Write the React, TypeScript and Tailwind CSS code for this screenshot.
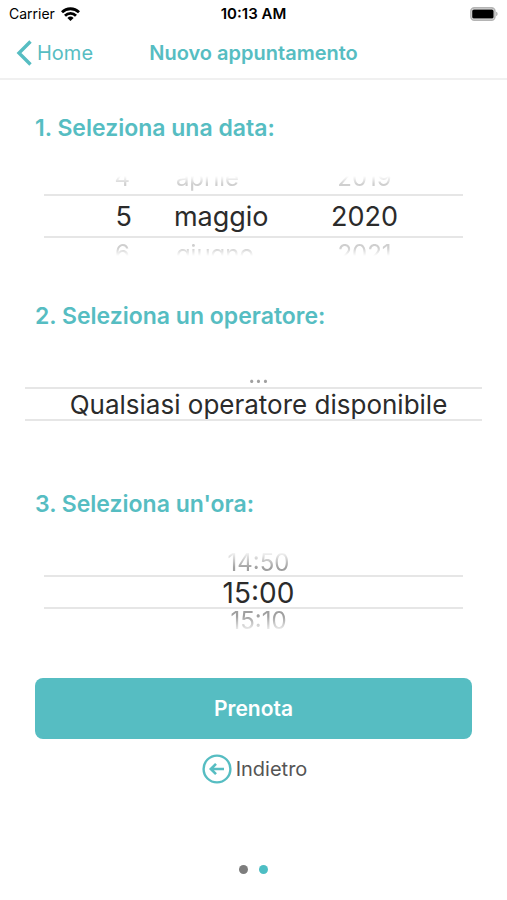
import { useState } from "react";
import clsx from "clsx";

type Column = {
  label: string;
  values: string[];
  index: number;
  onChange: (index: number) => void;
  className?: string;
  sideClassName?: string;
};

type WheelProps = {
  columns: Column[];
  gridClassName: string;
  textClassName: string;
  tall?: boolean;
};

const days = Array.from({ length: 31 }, (_, i) => String(i + 1));
const months = [
  "gennaio",
  "febbraio",
  "marzo",
  "aprile",
  "maggio",
  "giugno",
  "luglio",
  "agosto",
  "settembre",
  "ottobre",
  "novembre",
  "dicembre",
];
const years = ["2018", "2019", "2020", "2021", "2022"];
const operators = ["...", "Qualsiasi operatore disponibile"];
const times = ["14:40", "14:50", "15:00", "15:10", "15:20"];

function Wheel({ columns, gridClassName, textClassName, tall }: WheelProps) {
  const side = (offset: number) =>
    columns.map((c) => {
      const value = c.values[c.index + offset];
      return value ? (
        <button
          key={c.label}
          type="button"
          aria-label={`${c.label}: ${value}`}
          onClick={() => c.onChange(c.index + offset)}
          className={clsx("leading-6", c.className, c.sideClassName)}
        >
          {value}
        </button>
      ) : (
        <span key={c.label} />
      );
    });

  return (
    <div>
      <div
        className={clsx(
          "grid content-end overflow-hidden text-2xl text-[#a0a0a0]",
          tall
            ? "h-5 pb-1 opacity-50 [mask-image:linear-gradient(to_top,black_50%,transparent_90%)]"
            : "h-6 [mask-image:linear-gradient(to_top,black_30%,transparent)]",
          gridClassName,
        )}
      >
        {side(-1)}
      </div>
      <div
        className={clsx(
          "grid items-center border-y-2 border-[#e6e6e6] pt-0.5 leading-7 text-[#2b2b2b]",
          tall ? "h-11" : "h-[34px]",
          textClassName,
          gridClassName,
        )}
      >
        {columns.map((c) => (
          <output key={c.label} aria-label={c.label} className={clsx("whitespace-nowrap", c.className)}>
            {c.values[c.index]}
          </output>
        ))}
      </div>
      <div
        className={clsx(
          "grid content-start overflow-hidden text-2xl text-[#a0a0a0]",
          tall
            ? "h-5 pt-1 opacity-50 [mask-image:linear-gradient(to_bottom,black_50%,transparent_90%)]"
            : "h-6 [mask-image:linear-gradient(to_bottom,black_30%,transparent)]",
          gridClassName,
        )}
      >
        {side(1)}
      </div>
    </div>
  );
}

function StatusBar() {
  return (
    <div className="grid h-7 grid-cols-3 items-center px-[9px] text-sm text-black">
      <div className="flex items-center gap-1.5">
        <span>Carrier</span>
        <svg width="19" height="14" viewBox="0 0 19 14" fill="none" stroke="#000" strokeWidth="2.8" aria-hidden="true">
          <path d="M1 5.2a12.2 12.2 0 0 1 17 0" />
          <path d="M4 8.7a7.8 7.8 0 0 1 11 0" />
          <path d="M9.5 14 6.4 10.9a4.5 4.5 0 0 1 6.2 0z" fill="#000" stroke="none" />
        </svg>
      </div>
      <span className="text-center text-[15px] font-semibold">10:13 AM</span>
      <svg className="justify-self-end" width="30" height="14" viewBox="0 0 30 14" aria-hidden="true">
        <rect x="2.9" y="0.9" width="24" height="12.2" rx="3.4" fill="#fff" stroke="#b4b4b4" strokeWidth="1.6" />
        <rect x="4.2" y="2.4" width="21.4" height="9.2" rx="1.6" fill="#000" />
        <path d="M28.2 4.8c1.8.6 1.8 3.8 0 4.4z" fill="#a9a9a9" />
      </svg>
    </div>
  );
}

export default function App() {
  const [day, setDay] = useState(4);
  const [month, setMonth] = useState(4);
  const [year, setYear] = useState(2);
  const [operator, setOperator] = useState(1);
  const [time, setTime] = useState(2);

  return (
    <div className="flex min-h-screen flex-col bg-white font-['Inter','Liberation_Sans',sans-serif]">
      <StatusBar />
      <header className="grid h-[52px] grid-cols-[1fr_auto_1fr] items-center border-b-2 border-[#f0f0f0] px-4 text-xl text-[#56bdc2]">
        <a href="#home" className="flex items-center gap-1">
          <svg width="17" height="26" viewBox="0 0 17 26" fill="none" stroke="currentColor" strokeWidth="3.4" aria-hidden="true">
            <path d="M14.5 1.5 3 13l11.5 11.5" />
          </svg>
          Home
        </a>
        <h1 className="font-semibold">Nuovo appuntamento</h1>
      </header>

      <main className="pt-8">
        <h2 className="px-[35px] text-[23px] leading-8 font-semibold text-[#56bdc2]">1. Seleziona una data:</h2>
        <div className="mt-[30px] px-[44px]">
          <Wheel
            tall
            textClassName="text-[27px]"
            gridClassName="grid-cols-[21%_10%_27%_37%_5%]"
            columns={[
              { label: "Giorno", values: days, index: day, onChange: setDay, className: "text-right", sideClassName: "pr-0.5" },
              { label: "Mese", values: months, index: month, onChange: setMonth, className: "col-start-3 text-left", sideClassName: "pl-0.5" },
              { label: "Anno", values: years, index: year, onChange: setYear, className: "text-center" },
            ]}
          />
        </div>

        <h2 className="mt-[42px] px-[35px] text-[23px] leading-8 font-semibold text-[#56bdc2]">
          2. Seleziona un operatore:
        </h2>
        <div className="mt-[31px] px-[25px]">
          <Wheel
            textClassName="text-[26px]"
            gridClassName="grid-cols-1 pl-2.5"
            columns={[
              { label: "Operatore", values: operators, index: operator, onChange: setOperator, className: "text-center" },
            ]}
          />
        </div>

        <h2 className="mt-[43px] px-[35px] text-[23px] leading-8 font-semibold text-[#56bdc2]">
          3. Seleziona un'ora:
        </h2>
        <div className="mt-[31px] px-[44px]">
          <Wheel
            textClassName="text-[28px]"
            gridClassName="grid-cols-1 pl-2.5"
            columns={[{ label: "Ora", values: times, index: time, onChange: setTime, className: "text-center" }]}
          />
        </div>

        <div className="mt-[45px] flex flex-col items-center px-[35px]">
          <button type="button" className="h-[61px] w-full rounded-lg bg-[#56bdc2] text-[21px] font-semibold text-white">
            Prenota
          </button>
          <button type="button" className="mt-[14px] flex h-8 items-center gap-1 pl-0.5 text-xl text-[#555]">
            <svg width="30" height="30" viewBox="0 0 30 30" fill="none" stroke="#56bdc2" aria-hidden="true">
              <circle cx="15" cy="15" r="13.4" strokeWidth="2.4" />
              <path d="M22 15H9M14 9.8 8.8 15l5.2 5.2" strokeWidth="2.6" />
            </svg>
            Indietro
          </button>
        </div>
      </main>

      <footer className="mt-auto flex justify-center gap-[11px] pt-6 pb-[26px]">
        <span className="size-[9px] rounded-full bg-[#7d7d7d]" />
        <span className="size-[9px] rounded-full bg-[#4dbec4]" />
      </footer>
    </div>
  );
}
